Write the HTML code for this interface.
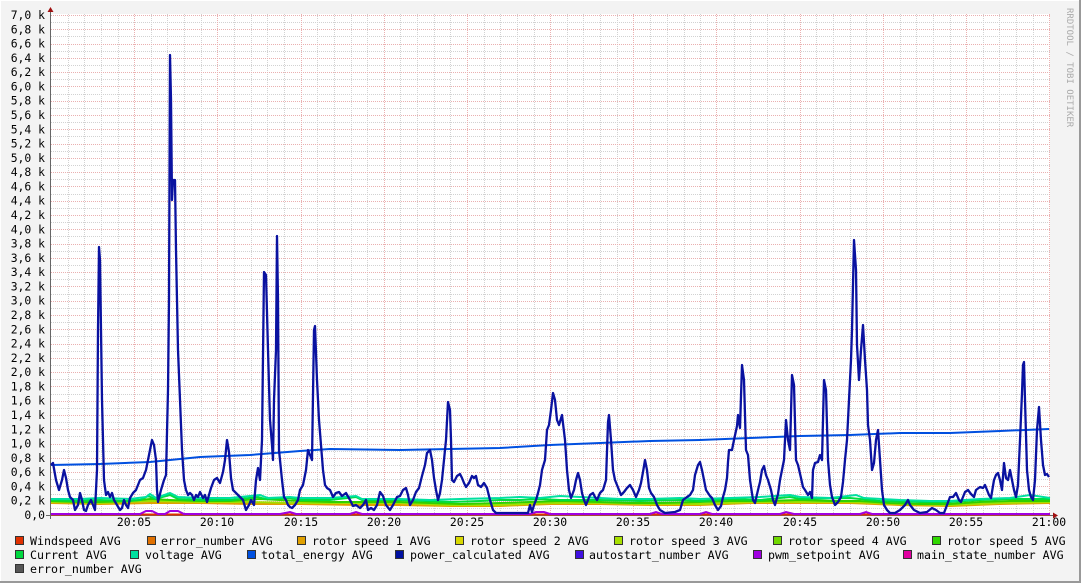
<!DOCTYPE html>
<html><head><meta charset="utf-8"><style>
html,body{margin:0;padding:0;background:#f3f3f3;}
svg{display:block;}
text{font-family:"DejaVu Sans Mono","Liberation Mono",monospace;font-size:11.4px;fill:#000;}
.lg text{font-size:11.6px;}
</style></head><body>
<svg width="1081" height="583" viewBox="0 0 1081 583" xmlns="http://www.w3.org/2000/svg">
<rect x="0" y="0" width="1081" height="583" fill="#f3f3f3"/>
<rect x="0" y="0" width="1081" height="1" fill="#fff"/>
<rect x="0" y="0" width="1" height="583" fill="#fff"/>
<rect x="1079" y="0" width="2" height="583" fill="#999"/>
<rect x="0" y="581" width="1081" height="2" fill="#999"/>
<rect x="51" y="14" width="999" height="501" fill="#fff"/>
<g shape-rendering="crispEdges" stroke-width="1" stroke-dasharray="1,1" fill="none">
<path stroke="#d2d2d2" d="M51,508.5H1050M51,494.5H1050M51,479.5H1050M51,465.5H1050M51,451.5H1050M51,436.5H1050M51,422.5H1050M51,408.5H1050M51,394.5H1050M51,379.5H1050M51,365.5H1050M51,351.5H1050M51,336.5H1050M51,322.5H1050M51,308.5H1050M51,294.5H1050M51,279.5H1050M51,265.5H1050M51,251.5H1050M51,236.5H1050M51,222.5H1050M51,208.5H1050M51,194.5H1050M51,179.5H1050M51,165.5H1050M51,151.5H1050M51,136.5H1050M51,122.5H1050M51,108.5H1050M51,94.5H1050M51,79.5H1050M51,65.5H1050M51,51.5H1050M51,36.5H1050M51,22.5H1050"/>
<path stroke="#d2d2d2" d="M68.5,14V515M84.5,14V515M101.5,14V515M118.5,14V515M151.5,14V515M167.5,14V515M184.5,14V515M201.5,14V515M234.5,14V515M251.5,14V515M267.5,14V515M284.5,14V515M317.5,14V515M334.5,14V515M351.5,14V515M367.5,14V515M400.5,14V515M417.5,14V515M434.5,14V515M450.5,14V515M484.5,14V515M500.5,14V515M517.5,14V515M534.5,14V515M567.5,14V515M583.5,14V515M600.5,14V515M617.5,14V515M650.5,14V515M667.5,14V515M684.5,14V515M700.5,14V515M734.5,14V515M750.5,14V515M767.5,14V515M784.5,14V515M816.5,14V515M833.5,14V515M850.5,14V515M866.5,14V515M900.5,14V515M916.5,14V515M933.5,14V515M950.5,14V515M983.5,14V515M999.5,14V515M1016.5,14V515M1033.5,14V515"/>
<path stroke="#eab0b0" d="M51,501.5H1050M51,486.5H1050M51,472.5H1050M51,458.5H1050M51,444.5H1050M51,429.5H1050M51,415.5H1050M51,401.5H1050M51,386.5H1050M51,372.5H1050M51,358.5H1050M51,344.5H1050M51,329.5H1050M51,315.5H1050M51,301.5H1050M51,286.5H1050M51,272.5H1050M51,258.5H1050M51,244.5H1050M51,229.5H1050M51,215.5H1050M51,201.5H1050M51,186.5H1050M51,172.5H1050M51,158.5H1050M51,144.5H1050M51,129.5H1050M51,115.5H1050M51,101.5H1050M51,86.5H1050M51,72.5H1050M51,58.5H1050M51,44.5H1050M51,29.5H1050M51,15.5H1050"/>
<path stroke="#eab0b0" d="M134.5,14V515M217.5,14V515M301.5,14V515M384.5,14V515M467.5,14V515M550.5,14V515M633.5,14V515M716.5,14V515M800.5,14V515M883.5,14V515M966.5,14V515M1049.5,14V515"/>
</g>
<!-- axes -->
<line x1="50.5" y1="10" x2="50.5" y2="519" stroke="#666" shape-rendering="crispEdges"/>
<line x1="46" y1="515.5" x2="1054" y2="515.5" stroke="#666" shape-rendering="crispEdges"/>
<polygon points="47.5,12 53.5,12 50.5,7" fill="#a01010"/>
<polygon points="1053,512.5 1053,518.5 1058,515.5" fill="#a01010"/>
<!-- y labels -->
<g text-anchor="end">
<text x="45" y="519">0,0</text>
<text x="45" y="504.7">0,2 k</text><text x="45" y="490.4">0,4 k</text><text x="45" y="476.1">0,6 k</text><text x="45" y="461.9">0,8 k</text><text x="45" y="447.6">1,0 k</text>
<text x="45" y="433.3">1,2 k</text><text x="45" y="419">1,4 k</text><text x="45" y="404.7">1,6 k</text><text x="45" y="390.4">1,8 k</text><text x="45" y="376.1">2,0 k</text>
<text x="45" y="361.9">2,2 k</text><text x="45" y="347.6">2,4 k</text><text x="45" y="333.3">2,6 k</text><text x="45" y="319">2,8 k</text><text x="45" y="304.7">3,0 k</text>
<text x="45" y="290.4">3,2 k</text><text x="45" y="276.1">3,4 k</text><text x="45" y="261.9">3,6 k</text><text x="45" y="247.6">3,8 k</text><text x="45" y="233.3">4,0 k</text>
<text x="45" y="219">4,2 k</text><text x="45" y="204.7">4,4 k</text><text x="45" y="190.4">4,6 k</text><text x="45" y="176.1">4,8 k</text><text x="45" y="161.9">5,0 k</text>
<text x="45" y="147.6">5,2 k</text><text x="45" y="133.3">5,4 k</text><text x="45" y="119">5,6 k</text><text x="45" y="104.7">5,8 k</text><text x="45" y="90.4">6,0 k</text>
<text x="45" y="76.1">6,2 k</text><text x="45" y="61.9">6,4 k</text><text x="45" y="47.6">6,6 k</text><text x="45" y="33.3">6,8 k</text><text x="45" y="19">7,0 k</text>
</g>
<g text-anchor="middle">
<text x="134" y="526">20:05</text><text x="217" y="526">20:10</text><text x="301" y="526">20:15</text><text x="384" y="526">20:20</text>
<text x="467" y="526">20:25</text><text x="550" y="526">20:30</text><text x="633" y="526">20:35</text><text x="716" y="526">20:40</text>
<text x="800" y="526">20:45</text><text x="883" y="526">20:50</text><text x="966" y="526">20:55</text><text x="1049" y="526">21:00</text>
</g>
<text transform="translate(1067,8) rotate(90)" style="font-size:9px;fill:#aaa">RRDTOOL / TOBI OETIKER</text>
<!-- baseline lines -->
<line x1="51" y1="514.5" x2="1050" y2="514.5" stroke="#e03000" stroke-width="2"/>
<polyline fill="none" stroke="#a000e0" stroke-width="2" points="51,514 140,514 146,511 152,511 158,514 165,514 170,511 178,511 184,514 280,514 290,512 296,514 350,514 356,512 362,514 530,514 536,512 544,512 550,514 650,514 656,512 662,514 700,514 706,512 712,514 780,514 786,512 794,514 860,514 866,512 872,514 1050,514"/>
<!-- green band -->
<polyline fill="none" stroke="#e0a000" stroke-width="2" points="51,503 100,504 150,503 200,503 250,504 300,504 360,505 400,505 450,506 500,506 550,504 600,504 650,505 700,505 750,503 800,503 850,503 900,505 950,506 1000,504 1050,503"/>
<polyline fill="none" stroke="#a0e000" stroke-width="2" points="51,502 100,503 150,501 200,502 250,502 300,503 360,503 400,503 450,505 500,505 550,503 600,503 650,504 700,504 750,502 800,502 850,502 900,504 950,505 1000,503 1050,502"/>
<polyline fill="none" stroke="#30d000" stroke-width="2" points="51,501 80,502 100,502 130,501 150,499 170,500 200,501 230,501 260,499 300,501 330,502 360,502 400,502 430,503 460,504 500,503 530,502 560,501 600,502 630,503 660,503 700,502 730,501 760,501 800,500 830,501 860,501 890,503 920,504 950,504 980,502 1010,501 1050,501"/>
<polyline fill="none" stroke="#00dd40" stroke-width="2" points="51,500 75,501 100,500 125,501 140,500 148,496 155,499 170,495 178,499 200,500 230,500 258,497 265,499 290,498 300,500 330,500 356,497 362,500 400,500 450,502 480,501 500,500 520,500 540,499 560,500 600,500 640,501 680,500 700,501 730,499 760,500 790,497 800,499 850,498 880,501 920,502 950,502 980,500 1010,499 1050,499"/>
<polyline fill="none" stroke="#00e0a0" stroke-width="2" points="51,499 80,499 100,498 130,499 146,497 150,494 156,498 170,493 178,497 200,498 230,498 260,495 268,498 290,497 300,498 330,498 356,496 362,499 400,499 430,500 460,499 500,498 520,497 540,498 560,496 580,497 600,498 620,499 650,499 680,498 700,499 730,498 760,497 790,495 800,497 830,498 856,495 864,498 900,500 930,501 950,501 980,499 1010,498 1030,495 1050,498"/>
<!-- total energy -->
<polyline fill="none" stroke="#0050e0" stroke-width="2" points="51,465 100,464 150,462 200,457 250,455 300,451 330,449 400,450 450,449 500,448 550,445 600,443 650,441 700,440 750,438 800,436 850,435 900,433 950,433 1000,431 1049,429"/>
<!-- power calculated -->
<polyline fill="none" stroke="#0a12a0" stroke-width="2.3" stroke-linejoin="round" points="51,465 53,463 56,480 59,490 62,480 64,470 66,478 68,490 70,497 73,500 75,510 78,505 80,493 82,500 84,510 86,511 88,505 91,500 93,505 95,510 97,470 98,330 99,247 100,260 101,330 102,400 104,480 106,495 108,492 110,497 112,493 114,500 117,505 120,510 122,508 124,500 126,505 128,508 130,498 133,493 136,490 140,480 143,478 146,470 149,455 152,440 154,445 156,460 157,490 158,502 161,490 164,480 166,475 168,390 169,300 170,55 171,100 172,200 173,180 175,180 176,250 178,350 180,400 182,450 184,480 186,490 188,495 190,493 192,495 194,500 196,495 198,497 200,492 203,498 205,495 207,502 209,495 211,488 214,480 217,478 220,483 223,472 225,460 227,440 229,452 231,478 233,490 236,493 240,497 243,500 246,510 249,505 251,500 254,505 256,480 258,468 260,480 262,440 264,272 266,275 268,350 270,420 272,445 273,460 274,400 276,350 277,236 278,300 279,450 280,460 282,480 284,497 286,500 288,505 290,507 292,508 295,505 298,500 300,490 303,485 306,470 308,450 310,455 312,460 314,330 315,326 317,380 319,420 321,445 323,470 325,485 327,488 330,490 333,497 336,493 339,492 342,496 346,493 350,500 353,506 356,505 360,508 363,505 366,500 368,510 371,508 374,510 377,505 380,492 383,496 386,505 390,510 393,505 397,497 400,496 403,490 406,488 408,495 410,505 413,500 416,492 419,488 422,476 425,465 427,453 430,450 432,460 434,478 436,490 438,500 440,493 442,480 444,460 446,440 448,402 450,410 451,440 452,480 454,482 457,476 460,474 462,478 464,483 466,487 469,483 472,476 474,478 476,476 478,485 481,487 484,483 487,488 490,500 493,510 496,513 528,513 530,505 532,512 534,505 536,500 538,493 540,485 542,470 545,460 547,430 549,425 551,410 553,393 555,400 557,420 559,425 562,415 565,440 567,470 569,490 571,498 574,490 576,480 578,473 580,480 582,493 584,500 586,505 588,500 590,495 593,493 595,497 597,500 600,493 603,490 606,480 608,422 609,415 611,440 613,470 615,480 617,485 619,490 621,495 624,492 627,488 630,485 633,490 636,497 639,490 641,483 643,472 645,460 647,470 649,488 651,493 654,497 657,505 660,510 665,513 675,512 680,510 683,500 687,497 690,495 693,490 695,475 698,465 700,462 702,470 704,480 706,490 710,496 712,498 715,505 718,510 721,506 723,497 725,490 727,478 728,462 729,450 732,450 734,440 737,426 738,415 740,428 742,365 744,380 746,450 748,455 750,480 753,500 755,503 758,490 760,482 762,470 764,466 766,475 768,480 771,490 773,500 775,505 778,494 780,480 782,470 784,460 786,420 788,440 790,450 792,375 794,385 796,460 798,465 801,478 803,487 805,490 808,495 810,492 812,498 813,470 815,463 818,462 820,455 822,460 824,380 826,390 828,460 830,485 832,497 835,505 838,502 841,497 843,482 845,460 847,440 849,400 851,360 852,330 854,240 856,270 857,345 859,380 861,350 863,325 865,360 867,390 868,425 870,440 872,470 874,463 876,440 878,430 880,460 882,490 884,505 887,510 890,513 895,513 900,510 905,505 908,500 910,505 914,510 920,513 927,512 932,508 936,510 940,513 944,513 947,505 950,497 953,497 956,493 959,500 961,502 963,497 965,492 968,490 971,494 974,497 976,490 980,487 983,488 985,485 987,490 989,495 991,498 994,480 996,475 998,473 1000,480 1002,490 1004,463 1006,478 1008,480 1010,470 1012,480 1014,490 1016,497 1018,485 1020,440 1022,393 1023,365 1024,362 1025,400 1027,470 1029,490 1031,497 1033,500 1035,480 1037,430 1039,407 1041,440 1043,465 1045,475 1047,474 1049,477"/>
<!-- legend -->
<g class="lg">
<g stroke="#333" stroke-width="1">
<rect x="15.5" y="536.5" width="8" height="8" fill="#e03000"/>
<rect x="147.5" y="536.5" width="8" height="8" fill="#e07000"/>
<rect x="297.5" y="536.5" width="8" height="8" fill="#e0a000"/>
<rect x="455.5" y="536.5" width="8" height="8" fill="#d8d800"/>
<rect x="614.5" y="536.5" width="8" height="8" fill="#a8e000"/>
<rect x="773.5" y="536.5" width="8" height="8" fill="#70d800"/>
<rect x="932.5" y="536.5" width="8" height="8" fill="#30d800"/>
<rect x="15.5" y="550.5" width="8" height="8" fill="#00d840"/>
<rect x="130.5" y="550.5" width="8" height="8" fill="#00e0a0"/>
<rect x="247.5" y="550.5" width="8" height="8" fill="#0050e0"/>
<rect x="395.5" y="550.5" width="8" height="8" fill="#0010a0"/>
<rect x="575.5" y="550.5" width="8" height="8" fill="#4010e0"/>
<rect x="753.5" y="550.5" width="8" height="8" fill="#a000e0"/>
<rect x="903.5" y="550.5" width="8" height="8" fill="#e000a0"/>
<rect x="15.5" y="564.5" width="8" height="8" fill="#555"/>
</g>
<text x="30" y="545">Windspeed AVG</text>
<text x="161" y="545">error_number AVG</text>
<text x="312" y="545">rotor speed 1 AVG</text>
<text x="470" y="545">rotor speed 2 AVG</text>
<text x="629" y="545">rotor speed 3 AVG</text>
<text x="788" y="545">rotor speed 4 AVG</text>
<text x="947" y="545">rotor speed 5 AVG</text>
<text x="30" y="559">Current AVG</text>
<text x="145" y="559">voltage AVG</text>
<text x="261" y="559">total_energy AVG</text>
<text x="410" y="559">power_calculated AVG</text>
<text x="589" y="559">autostart_number AVG</text>
<text x="768" y="559">pwm_setpoint AVG</text>
<text x="917" y="559">main_state_number AVG</text>
<text x="30" y="573">error_number AVG</text>
</g>
</svg>
</body></html>
